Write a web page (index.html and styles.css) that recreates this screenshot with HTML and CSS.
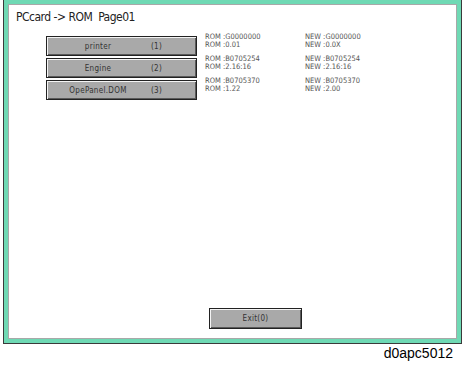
FILE: index.html
```html
<!DOCTYPE html>
<html>
<head>
    <meta charset="UTF-8">
    <title>PCcard -> ROM</title>
    <link rel="stylesheet" href="styles.css">
</head>
<body>
    <div class="frame">
        <div class="panel">
            <div class="title">PCcard -&gt; ROM&nbsp;&nbsp;Page01</div>

            <div class="rows">
                <div class="row">
                    <button class="key"><span class="key-name">printer</span><span class="key-num">(1)</span></button>
                    <div class="ver">
                        <div>ROM :G0000000</div>
                        <div>ROM :0.01</div>
                    </div>
                    <div class="ver">
                        <div>NEW :G0000000</div>
                        <div>NEW :0.0X</div>
                    </div>
                </div>
                <div class="row">
                    <button class="key"><span class="key-name">Engine</span><span class="key-num">(2)</span></button>
                    <div class="ver">
                        <div>ROM :B0705254</div>
                        <div>ROM :2.16:16</div>
                    </div>
                    <div class="ver">
                        <div>NEW :B0705254</div>
                        <div>NEW :2.16:16</div>
                    </div>
                </div>
                <div class="row">
                    <button class="key"><span class="key-name">OpePanel.DOM</span><span class="key-num">(3)</span></button>
                    <div class="ver">
                        <div>ROM :B0705370</div>
                        <div>ROM :1.22</div>
                    </div>
                    <div class="ver">
                        <div>NEW :B0705370</div>
                        <div>NEW :2.00</div>
                    </div>
                </div>
            </div>

            <div class="exit-bar">
                <button class="key exit">Exit(0)</button>
            </div>
        </div>
    </div>
    <div class="caption">d0apc5012</div>
</body>
</html>
```

FILE: styles.css
```css
* {
    box-sizing: border-box;
    margin: 0;
    padding: 0;
}

body {
    width: 462px;
    height: 367px;
    background: #ffffff;
    font-family: "DejaVu Sans Condensed", "Liberation Sans Narrow", "DejaVu Sans", sans-serif;
    color: #333333;
    overflow: hidden;
}

.frame {
    margin-left: 3px;
    width: 459px;
    height: 344px;
    background: #6fd9b4;
    border: 1px solid #3a3a3a;
    border-top: none;
    padding: 4px 4px 4px 4px;
}

.panel {
    height: 100%;
    background: #ffffff;
    border: 1px solid #a8a8a8;
    display: flex;
    flex-direction: column;
}

.title {
    font-size: 12px;
    letter-spacing: -0.5px;
    color: #222222;
    padding: 5px 0 0 7px;
    height: 31px;
}

.rows {
    display: flex;
    flex-direction: column;
    gap: 2px;
    padding-left: 37px;
}

.row {
    display: flex;
    align-items: flex-start;
    height: 20px;
}

.key {
    font-family: inherit;
    font-size: 8px;
    letter-spacing: 0.3px;
    color: #333333;
    background: #a9a9a9;
    border: 1px solid #222222;
    box-shadow: inset 1px 1px 0 #f4f4f4, inset -1px -1px 0 #5a5a5a;
    cursor: pointer;
}

.rows .key {
    width: 151px;
    height: 20px;
    display: flex;
    align-items: center;
    padding: 0;
    text-align: left;
}

.key-name {
    width: 102px;
    text-align: center;
}

.key-num {
    margin-left: 2px;
}

.ver {
    font-size: 7.5px;
    line-height: 8px;
    color: #555555;
    margin-top: -3px;
    width: 100px;
}

.rows .key + .ver {
    margin-left: 8px;
}

.exit-bar {
    margin-top: auto;
    padding: 0 0 9px 200px;
}

.exit {
    width: 93px;
    height: 21px;
}

.caption {
    font-family: "Liberation Sans", Arial, sans-serif;
    font-size: 14px;
    color: #000000;
    text-align: right;
    padding: 1px 9px 0 0;
}
```
